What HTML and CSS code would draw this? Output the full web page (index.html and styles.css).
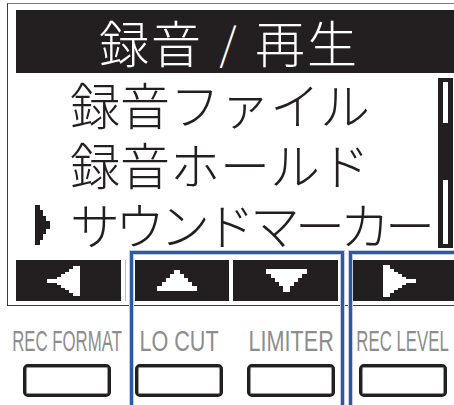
FILE: index.html
```html
<!DOCTYPE html>
<html lang="ja">
<head>
<meta charset="utf-8">
<link rel="stylesheet" href="styles.css">
</head>
<body>
<div class="page">
  <div class="screen">
    <div class="title">録音<span class="slash">/</span>再生</div>
    <div class="menu">
      <div class="items">
        <div class="item"><span class="marker"></span><span class="txt">録音ファイル</span></div>
        <div class="item"><span class="marker"></span><span class="txt">録音ホールド</span></div>
        <div class="item current">
          <span class="marker"><svg width="15" height="40" viewBox="0 0 15 40"><path d="M0 0H5V5H8V11H11V16H15V24H11V29H8V35H5V40H0Z" fill="#231f20"/></svg></span>
          <span class="txt tight">サウンドマーカー</span>
        </div>
      </div>
      <div class="scrollbar">
        <div class="track t1"></div>
        <div class="track t2"></div>
      </div>
    </div>
    <div class="softkeys">
      <div class="seg s1"><svg width="33" height="30" viewBox="0 0 33 30"><path d="M0 13H10V11H14V8H18V6H22V3H26V0H33V30H26V27H22V24H18V22H14V19H10V17H0Z" fill="#fff"/></svg></div>
      <div class="sep"></div>
      <div class="seg s2"><svg width="40" height="21" viewBox="0 0 40 21"><path d="M17 0H23V4H27V8H31V12H35V16H40V21H0V16H5V12H9V8H13V4H17Z" fill="#fff"/></svg></div>
      <div class="seg s3"><svg width="41" height="23" viewBox="0 0 41 23"><path d="M0 0H41V5H36V9H32V13H28V17H24V23H17V17H13V13H9V9H5V5H0Z" fill="#fff"/></svg></div>
      <div class="seg s4"><svg width="33" height="32" viewBox="0 0 33 32"><path d="M33 14H23V12H19V9H15V7H11V4H7V0H0V32H7V28H11V25H15V23H19V20H23V18H33Z" fill="#fff"/></svg></div>
    </div>
  </div>
  <div class="labels">
    <div class="lbl"><span class="l-rec">REC FORMAT</span></div>
    <div class="lbl"><span class="l-std">LO CUT</span></div>
    <div class="lbl"><span class="l-std">LIMITER</span></div>
    <div class="lbl"><span class="l-rec">REC LEVEL</span></div>
  </div>
  <div class="buttons">
    <div class="bcell"><div class="btn"></div></div>
    <div class="bcell"><div class="btn"></div></div>
    <div class="bcell"><div class="btn"></div></div>
    <div class="bcell"><div class="btn"></div></div>
  </div>
  <div class="focus f1"></div>
  <div class="focus f2"></div>
</div>
</body>
</html>
```
FILE: styles.css
```css
html, body {
  margin: 0;
  padding: 0;
  background: #fff;
  overflow: hidden;
}
.page {
  position: relative;
  width: 454px;
  height: 405px;
  overflow: hidden;
  font-family: "Noto Sans CJK JP", sans-serif;
  color: #231f20;
}
.screen {
  margin: 3px 0 0 7px;
  border-left: 1px solid #3a3a3a;
  border-top: 1px solid #777;
  border-bottom: 1px solid #3a3a3a;
  padding: 6px 0 4px 8px;
}
.title {
  display: flex;
  align-items: center;
  height: 63px;
  line-height: 59px;
  background: #231f20;
  color: #fff;
  font-size: 50px;
  font-weight: 300;
  letter-spacing: 2px;
  padding-left: 83px;
  white-space: nowrap;
}
.title .slash {
  display: block;
  width: 52px;
  text-align: center;
  font-size: 44px;
}
.menu {
  display: flex;
  height: 187px;
}
.items {
  flex: 1;
}
.item {
  display: flex;
  align-items: center;
  height: 60px;
  font-size: 50px;
  font-weight: 300;
  white-space: nowrap;
}
.txt {
  display: block;
  height: 60px;
  line-height: 60px;
}
.marker {
  display: flex;
  width: 15px;
  margin-left: 19px;
  margin-right: 20px;
  margin-top: 4px;
}
.txt.tight {
  letter-spacing: -5px;
}
.scrollbar {
  width: 5px;
  height: 162px;
  margin: 5px 1px 0 0;
  padding: 4px 5px;
  background: #231f20;
  display: flex;
  flex-direction: column;
  justify-content: space-between;
}
.track {
  background: #fff;
}
.t1 { height: 41px; }
.t2 { height: 64px; }
.softkeys {
  display: flex;
  height: 41px;
}
.seg {
  background: #231f20;
  display: flex;
  align-items: center;
}
.seg svg { display: block; }
.s1 { width: 74px; padding-left: 31px; }
.sep {
  width: 1px;
  margin: 0 9px 0 4px;
  background: #bbb;
}
.s2 { width: 72px; padding-left: 22px; margin-right: 4px; }
.s3 { width: 72px; padding-left: 33px; margin-right: 15px; }
.s4 { flex: 1; padding-left: 30px; }
.labels {
  display: grid;
  grid-template-columns: repeat(4, 112px);
  margin: 20px 0 0 11px;
  height: 30px;
  line-height: 30px;
  font-family: "Liberation Sans", Arial, sans-serif;
  font-size: 30px;
  color: #8d8d8d;
}
.lbl {
  display: flex;
  justify-content: center;
  white-space: nowrap;
}
.lbl span {
  display: inline-block;
  transform-origin: center;
}
.l-rec { transform: scaleX(0.56); }
.l-std { transform: scaleX(0.72); }
.buttons {
  display: grid;
  grid-template-columns: repeat(4, 112px);
  margin: 8px 0 0 11px;
}
.bcell {
  display: flex;
  justify-content: center;
}
.btn {
  width: 82px;
  height: 27px;
  border: 3px solid #231f20;
  border-radius: 5px;
  box-shadow: inset 0 0 0 1px #9a9a9a;
}
.focus {
  position: absolute;
  top: 251px;
  height: 200px;
  border: 3px solid #2c58a6;
  border-bottom: none;
  box-shadow: 0 0 0 1px #c3cde6, inset 0 0 0 1px #c3cde6;
}
.f1 { left: 130px; width: 208px; }
.f2 { left: 349px; width: 200px; }
```
